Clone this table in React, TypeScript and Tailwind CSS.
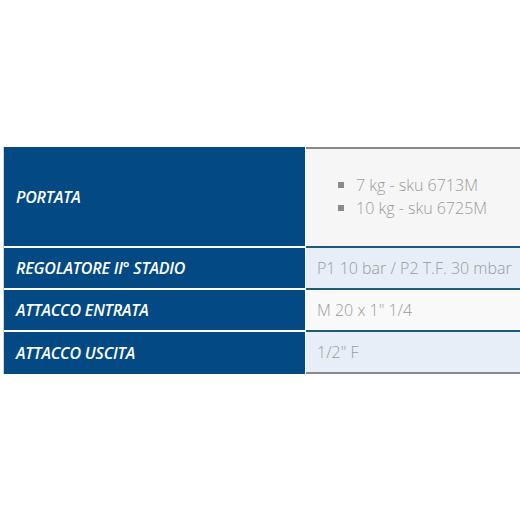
import React from 'react';

const rows = [
  { label: 'REGOLATORE II° STADIO', value: 'P1 10 bar / P2 T.F. 30 mbar', bg: 'bg-[#e7eef8]' },
  { label: 'ATTACCO ENTRATA', value: 'M 20 x 1" 1/4', bg: 'bg-[#f9f9f9]' },
  { label: 'ATTACCO USCITA', value: '1/2" F', bg: 'bg-[#e7eef8]' },
];

export default function App() {
  return (
    <div className="w-[520px] h-[520px] bg-white pt-[147px] pl-[3px] font-['Open_Sans',sans-serif] text-[16px]">
      <div className="flex flex-col border-l border-[#d0d0d0]">
        {/* portata */}
        <div className="flex h-[101px]">
          <div className="w-[301px] bg-[#034a85] border-b-2 border-white flex items-center pl-[12px]">
            <span className="text-white italic font-semibold tracking-[-0.2px]">PORTATA</span>
          </div>
          <div className="flex-1 ml-px bg-[#f6f6f6] border-t-2 border-t-[#8a8a8a] border-b-2 border-b-[#1d5a7c] flex items-center pl-[32px]">
            <ul className="text-[#9a9a9a] font-light leading-[23px] mt-[-2px]">
              <li className="flex items-center"><span className="w-[6px] h-[6px] bg-[#8a8a8a] mr-[12px]" />7 kg - sku 6713M</li>
              <li className="flex items-center"><span className="w-[6px] h-[6px] bg-[#8a8a8a] mr-[12px]" />10 kg - sku 6725M</li>
            </ul>
          </div>
        </div>
        {rows.map((r, i) => (
          <div key={r.label} className="flex h-[42px]">
            <div className={`w-[301px] bg-[#034a85] flex items-center pl-[12px] ${i < rows.length - 1 ? 'border-b-2 border-white' : ''}`}>
              <span className="text-white italic font-semibold tracking-[-0.2px]">{r.label}</span>
            </div>
            <div className={`flex-1 ml-px ${r.bg} flex items-center pl-[11px] ${i < rows.length - 1 ? 'border-b-2 border-b-[#1d5a7c]' : 'border-b-2 border-b-[#8a8a8a]'}`}>
              <span className="text-[#9a9a9a] font-light">{r.value}</span>
            </div>
          </div>
        ))}
      </div>
    </div>
  );
}
